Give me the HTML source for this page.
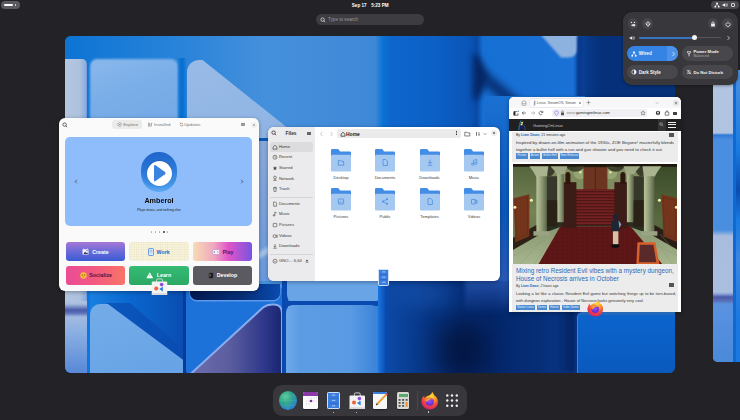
<!DOCTYPE html>
<html><head><meta charset="utf-8">
<style>
*{box-sizing:border-box;margin:0;padding:0}
html,body{width:740px;height:420px;overflow:hidden;background:#232327;font-family:"Liberation Sans",sans-serif}
.a{position:absolute}
#ws{left:65px;top:36px;width:610px;height:337px;border-radius:6px;overflow:hidden;background:#1272d4}
#ws2{left:713px;top:60px;width:40px;height:304px;border-radius:6px;overflow:hidden;background:#a9bedf}
.t5{font-size:4.4px;white-space:nowrap;line-height:6px}
.tile{width:59.8px;height:19.4px;border-radius:3px}
.tt{width:59.8px;height:19.4px;display:flex;align-items:center;justify-content:center;font-size:5.3px;font-weight:bold;white-space:nowrap}
.ico{display:inline-block;width:6px;height:6px;margin-right:3px}
.sl{font-size:4.15px;color:#3a3a3a;white-space:nowrap;line-height:6px}
.flab{width:50px;text-align:center;font-size:4.1px;line-height:6px;color:#3c3c3c;white-space:nowrap}
.ft{white-space:normal}
.tag{height:5.8px;background:#4a8ad0;color:#e8f0ff;font-size:3px;line-height:5.8px;text-align:center;white-space:nowrap;overflow:hidden;border-radius:.5px}
.qc{width:10.6px;height:11px;border-radius:50%;background:#464649}
.qt{font-size:4.5px;font-weight:bold;color:#f4f4f4;white-space:nowrap;line-height:6px}
.win{position:absolute;background:#fff;border-radius:6px;overflow:hidden;box-shadow:0 1px 4px rgba(0,0,0,.35)}
</style></head><body>
<!-- top bar -->
<div class="a" style="left:1px;top:1px;width:19px;height:8px;border-radius:4px;background:#5b5b5f"></div>
<div class="a" style="left:4px;top:4px;width:9px;height:2px;border-radius:1px;background:#fff"></div>
<div class="a" style="left:14.5px;top:4px;width:1.5px;height:2px;background:#c8c8c8"></div>
<div class="a" style="left:351.8px;top:2.8px;font-size:4.6px;line-height:6px;font-weight:bold;color:#fff;white-space:nowrap">Sep 17</div><div class="a" style="left:371.2px;top:2.8px;font-size:4.6px;line-height:6px;font-weight:bold;color:#fff;white-space:nowrap">5:23 PM</div>
<div class="a" style="left:711px;top:1px;width:28px;height:8px;border-radius:4px;background:#4a4a4e"></div>
<svg class="a" style="left:714.2px;top:2px" width="6" height="6" viewBox="0 0 6 6"><circle cx="3" cy="1.3" r=".9" fill="#fff"/><circle cx="1.3" cy="4.7" r=".9" fill="#fff"/><circle cx="4.7" cy="4.7" r=".9" fill="#fff"/><path d="M3 1.3L1.3 4.7M3 1.3L4.7 4.7" stroke="#fff" stroke-width=".6"/></svg>
<svg class="a" style="left:722.4px;top:2px" width="6" height="6" viewBox="0 0 6 6"><path d="M.6 2.2H1.8L3.2 1V5L1.8 3.8H.6Z" fill="#fff"/><path d="M4 1.8Q4.8 3 4 4.2M4.9 1.2Q6 3 4.9 4.8" stroke="#fff" stroke-width=".5" fill="none"/></svg>
<div class="a" style="left:730.8px;top:2.6px;width:4.6px;height:4.6px;border-radius:1.2px;border:.9px solid #eee"></div>

<!-- search -->
<div class="a" style="left:316px;top:13.5px;width:108px;height:11.5px;border-radius:6px;background:#3c3c41"></div>
<svg class="a" style="left:319.5px;top:16.5px" width="6" height="6" viewBox="0 0 6 6"><circle cx="2.6" cy="2.6" r="1.7" fill="none" stroke="#ddd" stroke-width=".8"/><path d="M3.8 3.8L5.2 5.2" stroke="#ddd" stroke-width=".8"/></svg>
<div class="a" style="left:328px;top:17.2px;font-size:4.6px;color:#9a9a9e;white-space:nowrap;line-height:6px">Type to search</div>

<!-- workspace -->
<div id="ws" class="a">
<div class="a" style="left:0;top:0;width:610px;height:337px;filter:blur(.7px)">
  <!-- base columns -->
  <div class="a" style="left:0;top:0;width:610px;height:337px;background:linear-gradient(90deg,#0c74d4 0px,#2a84da 120px,#4590dc 200px,#3f88d8 310px,#0a72d6 318px,#0e66cc 326px,#0c60c6 370px,#0a54b6 405px,#0a4aa6 412px,#1670d4 418px,#1a70d6 508px,#0a4aa0 514px,#083a8a 522px,#06307a 535px,#063078 610px)"></div>
  <!-- block A -->
  <div class="a" style="left:-8px;top:22.5px;width:30px;height:300px;border-radius:5px;background:linear-gradient(90deg,#b8c9e2,#adc2df 75%,#8eaede 95%,#6a96da)"></div>
  <div class="a" style="left:-8px;top:265px;width:30px;height:80px;background:linear-gradient(180deg,#b0c4e0 0px,#a8bee0 3px,#4a5aa8 9px,#5a70b8 12px,#a2bae2 16px,#8cb0e2 30px,#5a8ad8 70px)"></div>
  <!-- block B -->
  <div class="a" style="left:0;top:0;width:610px;height:337px;filter:blur(1.3px)"><div class="a" style="left:25px;top:23px;width:88px;height:79px;border-radius:7px;background:linear-gradient(160deg,#8ab8ec 0%,#7aaee8 40%,#74a8e6)"></div></div>
  <!-- block C diagonal -->
  <div class="a" style="left:0;top:0;width:610px;height:337px;filter:blur(.6px)"><div class="a" style="left:122px;top:24px;width:120px;height:78px;border-radius:12px 0 0 0;background:linear-gradient(160deg,#98bae6,#8eb4e4);clip-path:polygon(0 0,13% 0,100% 107%,100% 100%,0 100%)"></div></div>
  <div class="a" style="left:112px;top:22px;width:10px;height:120px;background:linear-gradient(90deg,rgba(8,112,208,0),#0870d0 40%,#0870d0 60%,rgba(8,112,208,0))"></div>
  <!-- block D light corner and chevron -->
  <div class="a" style="left:0;top:0;width:610px;height:337px;filter:blur(1.2px)"><div class="a" style="left:468px;top:-10px;width:45px;height:31.5px;border-radius:0 0 10px 0;background:#8eb2e0;clip-path:polygon(0 0,100% 0,100% 100%,62% 100%)"></div></div>
  <div class="a" style="left:0;top:0;width:610px;height:337px;filter:blur(3px)"><div class="a" style="left:408px;top:18px;width:22px;height:46px;background:#052664;clip-path:polygon(20% 0,80% 50%,20% 100%,0 100%,0 0)"></div></div><div class="a" style="left:416px;top:52px;width:44px;height:11px;background:#06286c;transform:rotate(40deg);filter:blur(4px)"></div>
  <div class="a" style="left:512px;top:0;width:6px;height:120px;background:#0a3a90;filter:blur(1px)"></div>

  <!-- mid region behind windows (gap shading) -->
  <div class="a" style="left:180px;top:102px;width:260px;height:3.5px;background:#0a5ab8;filter:blur(.5px)"></div><div class="a" style="left:180px;top:105px;width:260px;height:140px;background:linear-gradient(180deg,#8aaadc,#7aa2dc 50%,#6a9ae0)"></div><div class="a" style="left:185px;top:210px;width:40px;height:6px;background:#a8c4ea;transform:rotate(-30deg);filter:blur(1.5px)"></div>
  <div class="a" style="left:420px;top:60px;width:100px;height:190px;background:linear-gradient(180deg,#1a70d2,#0a58bc 60%,#2a5ab8)"></div>

  <!-- bottom: block A band already; bright line -->
  <div class="a" style="left:22px;top:255px;width:4px;height:82px;background:#0a78e0"></div>
  <!-- region above light triangle -->
  <div class="a" style="left:25px;top:255px;width:96px;height:82px;background:linear-gradient(90deg,#1a80e0 0%,#0a68d0 40%,#0a4cb0 100%)"></div>
  <svg class="a" style="left:25px;top:255px" width="96" height="82" viewBox="0 0 96 82"><path d="M16 12L96 80V60L40 12Z" fill="#0a4cb0" opacity=".7"/></svg>
  <div class="a" style="left:0;top:0;width:610px;height:337px;filter:blur(.6px)"><div class="a" style="left:25px;top:267.5px;width:96px;height:69.5px;border-radius:10px 0 0 0;background:linear-gradient(160deg,#74ace8,#66a2e6);clip-path:polygon(0 0,18% 0,100% 84%,100% 100%,0 100%)"></div></div>
  <!-- block E -->
  <div class="a" style="left:118px;top:255px;width:4px;height:82px;background:#083a98"></div>
  <div class="a" style="left:121px;top:250px;width:97px;height:90px;border-radius:6px;background:#1c72d8"></div>
  <div class="a" style="left:125px;top:248px;width:89.5px;height:15.5px;border-radius:0 0 7px 7px;background:linear-gradient(90deg,#021a50,#06307a 60%,#0a4ab0);box-shadow:0 .8px 0 .6px rgba(120,170,240,.7)"></div>
  <svg class="a" style="left:122px;top:266px" width="98" height="72" viewBox="-2 -2.5 98 72"><defs><linearGradient id="pg" x1="0" y1="0" x2="1" y2="0"><stop offset="0" stop-color="#6e6eae"/><stop offset=".45" stop-color="#5a5c9e"/><stop offset=".8" stop-color="#30388a"/><stop offset="1" stop-color="#182670"/></linearGradient><filter id="sb"><feGaussianBlur stdDeviation=".5"/></filter></defs><g filter="url(#sb)"><path d="M0 70L74 3Q78 0 83 0H85Q93 0 93 9V70Z" fill="url(#pg)"/><path d="M1 70L74 3Q78 0 83 0H85Q93 0 93 9V70" fill="none" stroke="#88acf0" stroke-width="2"/></g></svg>
  <!-- block F -->
  <div class="a" style="left:217px;top:245px;width:6px;height:92px;background:#0a4ab0"></div>
  <div class="a" style="left:222px;top:240px;width:92.5px;height:25.5px;border-radius:0 0 7px 7px;background:#68a4e6;filter:blur(.4px)"></div>
  <div class="a" style="left:219px;top:265px;width:98px;height:5px;background:#0a4ab0"></div>
  <div class="a" style="left:221px;top:269px;width:92px;height:70px;border-radius:7px 7px 0 0;background:linear-gradient(90deg,#6ea8ea 0%,#5c9ce4 15%,#5a9ae4 70%,#3a82d8 100%);filter:blur(.4px)"></div>
  <div class="a" style="left:313px;top:245px;width:8px;height:92px;background:linear-gradient(90deg,#1a78e0,#0a4ab0)"></div>
  <!-- dark middle -->
  <div class="a" style="left:320px;top:245px;width:192px;height:92px;background:linear-gradient(90deg,#0c4aa8 0%,#06327e 25%,#04266a 55%,#062e76 80%,#0a3a90 100%)"></div>
  <div class="a" style="left:372px;top:282px;width:50px;height:65px;border-radius:50%;background:#020c2c;filter:blur(12px);opacity:.65"></div><div class="a" style="left:330px;top:245px;width:60px;height:25px;border-radius:50%;background:#1a5ab8;filter:blur(10px);opacity:.6"></div><div class="a" style="left:440px;top:245px;width:60px;height:20px;border-radius:50%;background:#2a6ad0;filter:blur(8px);opacity:.6"></div>
  <div class="a" style="left:490px;top:245px;width:20px;height:92px;background:linear-gradient(90deg,rgba(4,30,90,0),#04205a);filter:blur(2px)"></div><div class="a" style="left:400px;top:238px;width:112px;height:40px;background:linear-gradient(180deg,rgba(42,90,184,.9),rgba(42,90,184,0));filter:blur(2px)"></div>
  <!-- block G bright -->
  <div class="a" style="left:512px;top:245px;width:98px;height:92px;background:#0a3a90"></div>
  <div class="a" style="left:512px;top:276px;width:100px;height:65px;border-radius:6px 0 0 0;background:linear-gradient(180deg,#3a8ae4 0px,#0c64cc 4px,#0a5ec4 60%,#0a58bc 100%);box-shadow:inset 1px 0 0 rgba(90,160,240,.6)"></div>
</div>
</div>
<div id="ws2" class="a" style="left:713px;top:70px;width:40px;height:292px;border-radius:5px;overflow:hidden;background:#a9bedf">
  <div class="a" style="left:0;top:0;width:40px;height:322px;filter:blur(.6px)">
  <div class="a" style="left:-2px;top:0;width:22px;height:322px;background:linear-gradient(180deg,#b2c5e1 0px,#b0c4e0 63px,#2f7ad8 65px,#4a8ee2 70px,#4a8ee0 160px,#a8bcde 166px,#aabfe0 222px,#8aa2d6 224px,#4a5aa8 227px,#5a70b8 231px,#5a92e0 234px,#4a8ad8 292px)"></div>
  <div class="a" style="left:20px;top:0;width:4px;height:322px;background:#0d6ad4"></div>
  <div class="a" style="left:23px;top:0;width:20px;height:322px;background:linear-gradient(180deg,#4a90e0 0px,#1a7ae0 80px,#0a4cb0 120px,#1a7ae0 150px,#3a86e0 190px,#1a78e0 250px,#1a78e0 322px)"></div>
  </div>
</div>
<!-- software window -->
<div class="win" style="left:59px;top:118px;width:200px;height:173px;background:#fafafa">
  <svg class="a" style="left:2.5px;top:3.5px" width="6" height="6" viewBox="0 0 6 6"><circle cx="2.6" cy="2.6" r="1.7" fill="none" stroke="#444" stroke-width=".8"/><path d="M3.8 3.8L5.2 5.2" stroke="#444" stroke-width=".8"/></svg>
  <div class="a" style="left:53.4px;top:2px;width:30px;height:9px;border-radius:3px;background:#ebebeb"></div>
  <svg class="a" style="left:58.2px;top:4.4px" width="5" height="5" viewBox="0 0 5 5"><circle cx="2.5" cy="2.5" r="1.8" fill="none" stroke="#777" stroke-width=".5"/><path d="M3.3 1.7L2.8 2.8 1.7 3.3 2.2 2.2z" fill="#777"/></svg>
  <div class="a t5" style="left:64.2px;top:3.6px;color:#777">Explore</div>
  <svg class="a" style="left:89.2px;top:4.3px" width="5" height="5" viewBox="0 0 5 5"><path d="M.6 4.6V.8M1.8 4.6V.8M3 4.6L3.8.8" stroke="#666" stroke-width=".6" fill="none"/></svg>
  <div class="a t5" style="left:95px;top:3.6px;color:#777">Installed</div>
  <svg class="a" style="left:119.8px;top:4.2px" width="5" height="5" viewBox="0 0 5 5"><path d="M4 2.5A1.5 1.5 0 0 0 1.4 1.5M1 2.5A1.5 1.5 0 0 0 3.6 3.5" stroke="#777" stroke-width=".5" fill="none"/><path d="M1.2 .7V1.7H2.2M3.8 4.3V3.3H2.8" stroke="#777" stroke-width=".45" fill="none"/></svg>
  <div class="a t5" style="left:125.2px;top:3.6px;color:#777">Updates</div>
  <div class="a" style="left:182px;top:4.6px;width:4px;height:3.8px;border-top:.5px solid #999;border-bottom:.5px solid #999"></div>
  <div class="a" style="left:182px;top:6.3px;width:4px;height:.5px;background:#999"></div>
  <div class="a" style="left:191.5px;top:3.5px;width:6px;height:6px;border-radius:50%;background:#f0f0f0"></div>
  <svg class="a" style="left:192.5px;top:4.5px" width="4" height="4" viewBox="0 0 4 4"><path d="M1.1 1.1L2.9 2.9M2.9 1.1L1.1 2.9" stroke="#777" stroke-width=".5"/></svg>

  <div class="a" style="left:6px;top:19px;width:187px;height:88.5px;border-radius:5px;background:#8fbdfb"></div>
  <svg class="a" style="left:15px;top:61px" width="4" height="5" viewBox="0 0 4 5"><path d="M2.8 .8L1.2 2.5 2.8 4.2" stroke="#333" stroke-width=".7" fill="none"/></svg>
  <svg class="a" style="left:181px;top:61px" width="4" height="5" viewBox="0 0 4 5"><path d="M1.2 .8L2.8 2.5 1.2 4.2" stroke="#333" stroke-width=".7" fill="none"/></svg>
  <!-- amberol icon -->
  <div class="a" style="left:82.2px;top:37px;width:35.8px;height:37.2px;border-radius:50%;background:linear-gradient(180deg,#2a64c0,#3c8ee6 70%,#5aa8f4)"></div>
  <div class="a" style="left:82.2px;top:34.4px;width:35.8px;height:36px;border-radius:50%;background:linear-gradient(170deg,#1e62c8 0%,#2a78d8 50%,#4a9cec 100%)"></div>
  <div class="a" style="left:87.5px;top:42.9px;width:25px;height:25px;border-radius:50%;background:#fff;box-shadow:0 -.6px 1px rgba(0,40,120,.35)"></div>
  <svg class="a" style="left:94px;top:46.2px" width="13.5" height="18.5" viewBox="0 0 13.5 18.5"><path d="M1 2.2Q1 .4 2.6 1.3L12 8.1Q13.2 9.2 12 10.2L2.6 17.1Q1 18 1 16.2Z" fill="#3a84e0"/></svg>
  <div class="a" style="left:40px;top:78.2px;width:120px;text-align:center;font-size:8px;line-height:9px;font-weight:bold;color:#0a0a0a;transform:scaleX(.9)">Amberol</div>
  <div class="a" style="left:40px;top:89.8px;width:120px;text-align:center;font-size:3.3px;color:#222">Plays music, and nothing else</div>

  <div class="a" style="left:91.7px;top:113px;width:1.6px;height:1.6px;border-radius:50%;background:#aaa"></div>
  <div class="a" style="left:95.7px;top:113px;width:1.6px;height:1.6px;border-radius:50%;background:#aaa"></div>
  <div class="a" style="left:99.7px;top:113px;width:1.6px;height:1.6px;border-radius:50%;background:#aaa"></div>
  <div class="a" style="left:103.6px;top:112.6px;width:2.2px;height:2.2px;border-radius:50%;background:#333"></div>
  <div class="a" style="left:107.7px;top:113px;width:1.6px;height:1.6px;border-radius:50%;background:#aaa"></div>

  <!-- tiles -->
  <div class="a tile" style="left:6.5px;top:124px;background:linear-gradient(180deg,#a678d4,#6a6ad8 50%,#3c5ad4)"></div>
  <div class="a tile" style="left:69.8px;top:124px;background-color:#f8f4dc;background-image:linear-gradient(rgba(210,200,160,.18) .4px,transparent .4px),linear-gradient(90deg,rgba(210,200,160,.18) .4px,transparent .4px);background-size:2.4px 2.4px"></div>
  <div class="a tile" style="left:133.6px;top:124px;background:linear-gradient(90deg,#f8dcb4,#f0a8c0 35%,#e054c8 60%,#7854e0)"></div>
  <div class="a tile" style="left:6.5px;top:147.8px;background:linear-gradient(90deg,#ea4c96,#f45a80 50%,#f87468)"></div>
  <div class="a tile" style="left:69.8px;top:147.8px;background:linear-gradient(180deg,#36bc74,#2aa864)"></div>
  <div class="a tile" style="left:133.6px;top:147.8px;background:#5b5a60"></div>

  <div class="a tt" style="left:6.5px;top:124px;color:#fff"><svg style="margin-right:3px" width="7" height="7" viewBox="0 0 7 7"><rect x=".5" y="1.2" width="6" height="5.3" rx=".6" fill="#f4f4f8"/><path d="M1.5 6L3 3.6 4.2 5 5.2 4.2 6 6Z" fill="#3a3a5a"/><circle cx="5" cy="2.6" r=".6" fill="#3a3a5a"/><path d="M1.2 .5L2.4 1.4M5.8 .5L4.6 1.4" stroke="#f4f4f8" stroke-width=".5"/></svg>Create</div>
  <div class="a tt" style="left:69.8px;top:124px;color:#1c62c8"><svg style="margin-right:3px" width="6" height="8" viewBox="0 0 6 8"><rect x=".5" y=".5" width="5" height="7" rx=".8" fill="#dbe8fa" stroke="#3a7ad8" stroke-width=".7"/><path d="M1.8 2.5H4.2M1.8 4H4.2" stroke="#3a7ad8" stroke-width=".4"/></svg>Work</div>
  <div class="a tt" style="left:133.6px;top:124px;color:#4a1a78"><svg style="margin-right:3px" width="8" height="6" viewBox="0 0 8 6"><rect x=".4" y=".6" width="7.2" height="4.8" rx="1" fill="#f8f4fa" stroke="#8a6aa0" stroke-width=".4"/><path d="M1.6 3H3M2.3 2.3V3.7" stroke="#5a3a7a" stroke-width=".5"/><circle cx="5.4" cy="2.5" r=".4" fill="#5a3a7a"/><circle cx="6.2" cy="3.4" r=".4" fill="#5a3a7a"/></svg>Play</div>
  <div class="a tt" style="left:6.5px;top:147.8px;color:#5a1030"><svg style="margin-right:2.5px;margin-left:1px" width="7" height="7" viewBox="0 0 7 7"><circle cx="3.5" cy="3.5" r="3.2" fill="#f8c433"/><path d="M1.6 2.6H3.1V3.4H1.6ZM3.9 2.6H5.4V3.4H3.9Z" fill="#8a5a10"/><path d="M2.4 4.8Q3.5 5.4 4.6 4.8" stroke="#8a5a10" stroke-width=".4" fill="none"/></svg>Socialize</div>
  <div class="a tt" style="left:69.8px;top:147.8px;color:#fff"><svg style="margin-right:3px" width="7.5" height="6.5" viewBox="0 0 7.5 6.5"><path d="M3.75 .3L7.2 6.2H.3Z" fill="#fff"/><path d="M3.75 2.2V4.6" stroke="#2fb26c" stroke-width=".5"/></svg>Learn</div>
  <div class="a tt" style="left:133.6px;top:147.8px;color:#fff"><svg style="margin-right:3px" width="6" height="7" viewBox="0 0 6 7"><rect x=".3" y=".3" width="5.4" height="6.4" rx=".5" fill="#1e1e22" stroke="#9a9aa0" stroke-width=".4"/><path d="M1.4 2.2L2.6 3.2 1.4 4.2" stroke="#fff" stroke-width=".45" fill="none"/></svg>Develop</div>
</div>

<!-- files window -->
<div class="win" style="left:268px;top:127px;width:232px;height:154px;">
  <div class="a" style="left:0;top:0;width:47px;height:154px;background:#ebebed"></div>
  <svg class="a" style="left:2.7px;top:3.3px" width="6" height="6" viewBox="0 0 6 6"><circle cx="2.6" cy="2.6" r="1.7" fill="none" stroke="#333" stroke-width=".8"/><path d="M3.8 3.8L5.2 5.2" stroke="#333" stroke-width=".8"/></svg>
  <div class="a" style="left:10px;top:3.6px;width:26px;text-align:center;font-size:4.8px;line-height:6px;font-weight:bold;color:#333">Files</div>
  <div class="a" style="left:39px;top:4.8px;width:4px;height:3.6px;border-top:.5px solid #666;border-bottom:.5px solid #666"></div><div class="a" style="left:39px;top:6.4px;width:4px;height:.5px;background:#666"></div>
  <div class="a" style="left:2px;top:15px;width:43px;height:9.5px;border-radius:2.5px;background:#dcdcde"></div>
  <svg class="a" style="left:3.9px;top:16.5px" width="6" height="6" viewBox="0 0 6 6"><path d="M1 3.2L3 1.3 5 3.2V5.2H1Z" fill="none" stroke="#333" stroke-width=".6"/></svg><div class="a sl" style="left:11px;top:16.7px">Home</div>
  <svg class="a" style="left:3.9px;top:27.0px" width="6" height="6" viewBox="0 0 6 6"><circle cx="3" cy="3.2" r="2" fill="none" stroke="#444" stroke-width=".6"/><path d="M3 2.1V3.3L3.8 3.8" stroke="#444" stroke-width=".5" fill="none"/></svg><div class="a sl" style="left:11px;top:27.2px">Recent</div>
  <svg class="a" style="left:3.9px;top:37.8px" width="6" height="6" viewBox="0 0 6 6"><path d="M3 1l.6 1.5 1.6.1-1.2 1 .4 1.6L3 4.3 1.6 5.2l.4-1.6-1.2-1 1.6-.1z" fill="#444"/></svg><div class="a sl" style="left:11px;top:38.0px">Starred</div>
  <svg class="a" style="left:3.9px;top:48.3px" width="6" height="6" viewBox="0 0 6 6"><circle cx="3" cy="2.5" r="1.4" fill="none" stroke="#444" stroke-width=".6"/><path d="M3 3.9V5.4M1.4 5.4H4.6" stroke="#444" stroke-width=".6"/></svg><div class="a sl" style="left:11px;top:48.5px">Network</div>
  <svg class="a" style="left:3.9px;top:59.0px" width="6" height="6" viewBox="0 0 6 6"><path d="M1.2 1.9H4.8M1.7 1.9L2 5.4H4L4.3 1.9M2.4 1.9V1.2H3.6V1.9" fill="none" stroke="#444" stroke-width=".6"/></svg><div class="a sl" style="left:11px;top:59.2px">Trash</div>
  <svg class="a" style="left:3.9px;top:73.6px" width="6" height="6" viewBox="0 0 6 6"><path d="M1.6 1H3.6L4.6 2V5.2H1.6Z" fill="none" stroke="#444" stroke-width=".6"/></svg><div class="a sl" style="left:11px;top:73.8px">Documents</div>
  <svg class="a" style="left:3.9px;top:84.1px" width="6" height="6" viewBox="0 0 6 6"><circle cx="2" cy="4.4" r=".8" fill="none" stroke="#444" stroke-width=".6"/><path d="M2.8 4.4V1.2L4.6 1.8" fill="none" stroke="#444" stroke-width=".6"/></svg><div class="a sl" style="left:11px;top:84.3px">Music</div>
  <svg class="a" style="left:3.9px;top:94.8px" width="6" height="6" viewBox="0 0 6 6"><rect x="1.2" y="1.4" width="3.6" height="3.4" rx=".4" fill="none" stroke="#444" stroke-width=".6"/></svg><div class="a sl" style="left:11px;top:95.0px">Pictures</div>
  <svg class="a" style="left:3.9px;top:105.5px" width="6" height="6" viewBox="0 0 6 6"><circle cx="2.6" cy="3.2" r="1.5" fill="none" stroke="#444" stroke-width=".6"/><path d="M4.2 2.4L5.2 2V4.4L4.2 4" fill="none" stroke="#444" stroke-width=".6"/></svg><div class="a sl" style="left:11px;top:105.7px">Videos</div>
  <svg class="a" style="left:3.9px;top:116.2px" width="6" height="6" viewBox="0 0 6 6"><path d="M3 1V4.2M1.8 3L3 4.2 4.2 3M1.2 5.2H4.8" fill="none" stroke="#444" stroke-width=".6"/></svg><div class="a sl" style="left:11px;top:116.4px">Downloads</div>
  <svg class="a" style="left:3.9px;top:130.5px" width="6" height="6" viewBox="0 0 6 6"><circle cx="3" cy="3.2" r="2" fill="none" stroke="#444" stroke-width=".6"/><circle cx="3" cy="3.2" r=".5" fill="#444"/></svg><div class="a sl" style="left:11px;top:130.7px">GNO… 6,64</div><svg class="a" style="left:36.5px;top:131.5px" width="4" height="4" viewBox="0 0 4 4"><path d="M2 .5L3.4 2.2H.6Z" fill="#444"/><rect x=".6" y="2.8" width="2.8" height=".6" fill="#444"/></svg>
  <div class="a" style="left:2px;top:69.5px;width:43px;height:.5px;background:#d6d6d8"></div>
  <div class="a" style="left:2px;top:126.6px;width:43px;height:.5px;background:#d6d6d8"></div>
  <svg class="a" style="left:51px;top:3.5px" width="5" height="6" viewBox="0 0 5 6"><path d="M3.2 1L1.6 3 3.2 5" stroke="#aaa" stroke-width=".6" fill="none"/></svg>
  <svg class="a" style="left:61px;top:3.5px" width="5" height="6" viewBox="0 0 5 6"><path d="M1.8 1L3.4 3 1.8 5" stroke="#aaa" stroke-width=".6" fill="none"/></svg>
  <div class="a" style="left:69px;top:1.8px;width:124px;height:9.4px;border-radius:2.5px;background:#ebebeb"></div>
  <svg class="a" style="left:71.5px;top:3.6px" width="6" height="6" viewBox="0 0 6 6"><path d="M1 3.2L3 1.3 5 3.2V5.2H1Z" fill="none" stroke="#222" stroke-width=".7"/></svg>
  <div class="a" style="left:78px;top:3.5px;font-size:5px;font-weight:bold;color:#222">Home</div>
  <div class="a" style="left:187.6px;top:4px;width:.9px;height:.9px;background:#333;box-shadow:0 1.5px #333,0 3px #333"></div>
  <svg class="a" style="left:196px;top:3.5px" width="7" height="6" viewBox="0 0 7 6"><path d="M.8 1.2H2.6L3.2 1.9H5.8V5H.8Z" fill="none" stroke="#333" stroke-width=".6"/></svg>
  <svg class="a" style="left:207px;top:3.5px" width="6" height="6" viewBox="0 0 6 6"><path d="M1.5 1V5M4 1V5M1 2.2H2M3.5 3.5H4.5" stroke="#444" stroke-width=".6" fill="none"/></svg>
  <svg class="a" style="left:215px;top:4.5px" width="4" height="4" viewBox="0 0 4 4"><path d="M.8 1.4L2 2.6 3.2 1.4" stroke="#444" stroke-width=".6" fill="none"/></svg>
  <div class="a" style="left:223px;top:3.4px;width:6px;height:6px;border-radius:50%;background:#ebebeb"></div><svg class="a" style="left:224px;top:4.4px" width="4" height="4" viewBox="0 0 4 4"><path d="M1 1L3 3M3 1L1 3" stroke="#444" stroke-width=".6"/></svg>
  <svg class="a" style="left:63px;top:22px" width="20" height="23" viewBox="0 0 20 23"><path d="M1.2 0H6.4Q7.4 0 8 .8L9 2.4H18.8Q20 2.4 20 3.6V21H0V1.2Q0 0 1.2 0Z" fill="#438de6"/><rect x="0" y="5.8" width="20" height="16.8" rx="1.4" fill="#a4c8f0"/><path d="M7.3 11.5h2.2l.6.8h2.6v3.9H7.3z" fill="none" stroke="#4a8ee0" stroke-width=".8"/></svg>
  <div class="a flab" style="left:48px;top:48px">Desktop</div>

  <svg class="a" style="left:107px;top:22px" width="20" height="23" viewBox="0 0 20 23"><path d="M1.2 0H6.4Q7.4 0 8 .8L9 2.4H18.8Q20 2.4 20 3.6V21H0V1.2Q0 0 1.2 0Z" fill="#438de6"/><rect x="0" y="5.8" width="20" height="16.8" rx="1.4" fill="#a4c8f0"/><path d="M8 10.5h2.8l1.6 1.6v4.4H8z" fill="none" stroke="#4a8ee0" stroke-width=".8"/></svg>
  <div class="a flab" style="left:92px;top:48px">Documents</div>

  <svg class="a" style="left:151.5px;top:22px" width="20" height="23" viewBox="0 0 20 23"><path d="M1.2 0H6.4Q7.4 0 8 .8L9 2.4H18.8Q20 2.4 20 3.6V21H0V1.2Q0 0 1.2 0Z" fill="#438de6"/><rect x="0" y="5.8" width="20" height="16.8" rx="1.4" fill="#a4c8f0"/><path d="M10 10.5v4.3M8.2 13l1.8 1.8 1.8-1.8M7.7 16.3h4.6" fill="none" stroke="#4a8ee0" stroke-width=".8"/></svg>
  <div class="a flab" style="left:136.5px;top:48px">Downloads</div>

  <svg class="a" style="left:196px;top:22px" width="20" height="23" viewBox="0 0 20 23"><path d="M1.2 0H6.4Q7.4 0 8 .8L9 2.4H18.8Q20 2.4 20 3.6V21H0V1.2Q0 0 1.2 0Z" fill="#438de6"/><rect x="0" y="5.8" width="20" height="16.8" rx="1.4" fill="#a4c8f0"/><circle cx="8.6" cy="15.2" r="1.1" fill="none" stroke="#4a8ee0" stroke-width=".8"/><circle cx="11.6" cy="14.5" r="1.1" fill="none" stroke="#4a8ee0" stroke-width=".8"/><path d="M9.7 15.2V11.2l3-.7v4" fill="none" stroke="#4a8ee0" stroke-width=".8"/></svg>
  <div class="a flab" style="left:181px;top:48px">Music</div>

  <svg class="a" style="left:63px;top:61px" width="20" height="23" viewBox="0 0 20 23"><path d="M1.2 0H6.4Q7.4 0 8 .8L9 2.4H18.8Q20 2.4 20 3.6V21H0V1.2Q0 0 1.2 0Z" fill="#438de6"/><rect x="0" y="5.8" width="20" height="16.8" rx="1.4" fill="#a4c8f0"/><rect x="7.4" y="11" width="5.2" height="5" rx=".6" fill="none" stroke="#4a8ee0" stroke-width=".8"/><path d="M8 15.4l1.6-1.8 1.2 1.1.8-.7" fill="none" stroke="#4a8ee0" stroke-width=".6"/></svg>
  <div class="a flab" style="left:48px;top:87px">Pictures</div>

  <svg class="a" style="left:107px;top:61px" width="20" height="23" viewBox="0 0 20 23"><path d="M1.2 0H6.4Q7.4 0 8 .8L9 2.4H18.8Q20 2.4 20 3.6V21H0V1.2Q0 0 1.2 0Z" fill="#438de6"/><rect x="0" y="5.8" width="20" height="16.8" rx="1.4" fill="#a4c8f0"/><circle cx="12" cy="11.3" r="1" fill="#4a8ee0"/><circle cx="8" cy="13.5" r="1" fill="#4a8ee0"/><circle cx="12" cy="15.8" r="1" fill="#4a8ee0"/><path d="M12 11.3L8 13.5 12 15.8" fill="none" stroke="#4a8ee0" stroke-width=".7"/></svg>
  <div class="a flab" style="left:92px;top:87px">Public</div>

  <svg class="a" style="left:151.5px;top:61px" width="20" height="23" viewBox="0 0 20 23"><path d="M1.2 0H6.4Q7.4 0 8 .8L9 2.4H18.8Q20 2.4 20 3.6V21H0V1.2Q0 0 1.2 0Z" fill="#438de6"/><rect x="0" y="5.8" width="20" height="16.8" rx="1.4" fill="#a4c8f0"/><path d="M8 10.5h2.8l1.6 1.6v4.4H8z" fill="none" stroke="#4a8ee0" stroke-width=".8"/></svg>
  <div class="a flab" style="left:136.5px;top:87px">Templates</div>

  <svg class="a" style="left:196px;top:61px" width="20" height="23" viewBox="0 0 20 23"><path d="M1.2 0H6.4Q7.4 0 8 .8L9 2.4H18.8Q20 2.4 20 3.6V21H0V1.2Q0 0 1.2 0Z" fill="#438de6"/><rect x="0" y="5.8" width="20" height="16.8" rx="1.4" fill="#a4c8f0"/><path d="M7.5 11.5h3.6v4.4H7.5zM11.1 13l1.8-1v3.4l-1.8-1" fill="none" stroke="#4a8ee0" stroke-width=".8"/></svg>
  <div class="a flab" style="left:181px;top:87px">Videos</div>

</div>

<!-- firefox window -->
<div class="win" style="left:509px;top:97px;width:172px;height:215px;border-radius:5px 5px 0 0;background:#fff">
  <div class="a" style="left:0;top:0;width:172px;height:11px;background:#f7f7f9"></div>
  <svg class="a" style="left:11.5px;top:2.6px" width="6" height="6" viewBox="0 0 6 6"><path d="M1 3V4.6Q1 5.3 1.7 5.3H4.3Q5 5.3 5 4.6V3Q5 .8 3 .8 1 .8 1 3Z" fill="none" stroke="#777" stroke-width=".55"/><path d="M1 3.4H2.2L2.6 3.9H3.4L3.8 3.4H5" fill="none" stroke="#777" stroke-width=".45"/></svg>
  <div class="a" style="left:21px;top:1.5px;width:53px;height:8.4px;border-radius:2px;background:#fff;box-shadow:0 0 0 .4px rgba(0,0,0,.12)"></div>
  <svg class="a" style="left:22.5px;top:3px" width="5" height="6" viewBox="0 0 5 6"><path d="M2.8 .6V4.4Q2.8 5.4 1.6 5.2" fill="none" stroke="#4a6a90" stroke-width=".8"/><path d="M1.4 2.8L2.8 3.6" stroke="#4a90c0" stroke-width=".6"/></svg>
  <div class="a" style="left:27.8px;top:2.7px;font-size:3.65px;color:#555;white-space:nowrap;line-height:6px">Linux, SteamOS, Steam</div>
  <svg class="a" style="left:68.5px;top:3.8px" width="4" height="4" viewBox="0 0 4 4"><path d="M1 1L3 3M3 1L1 3" stroke="#555" stroke-width=".5"/></svg>
  <svg class="a" style="left:77px;top:3.4px" width="5" height="5" viewBox="0 0 5 5"><path d="M2.5 .5V4.5M.5 2.5H4.5" stroke="#666" stroke-width=".55"/></svg>
  <svg class="a" style="left:145.8px;top:3.6px" width="4" height="4" viewBox="0 0 4 4"><path d="M.8 1.4L2 2.6 3.2 1.4" stroke="#888" stroke-width=".5" fill="none"/></svg>
  <div class="a" style="left:163.5px;top:2.5px;width:6px;height:6px;border-radius:50%;background:#e2e2e6"></div><svg class="a" style="left:164.5px;top:3.5px" width="4" height="4" viewBox="0 0 4 4"><path d="M1 1L3 3M3 1L1 3" stroke="#555" stroke-width=".5"/></svg>

  <svg class="a" style="left:3.5px;top:13.2px" width="7" height="6" viewBox="0 0 7 6"><path d="M.8 1.6H4.2M.8 1.6V5.2H5V3.2" fill="none" stroke="#222" stroke-width=".6"/><rect x=".8" y="1.6" width="1.6" height="3.6" fill="#222"/><circle cx="5.2" cy="1.2" r=".8" fill="#3a9ad8"/></svg>
  <svg class="a" style="left:11.8px;top:13.3px" width="6" height="6" viewBox="0 0 6 6"><path d="M5 3H1.2M2.8 1.4L1.2 3 2.8 4.6" stroke="#333" stroke-width=".6" fill="none"/></svg>
  <svg class="a" style="left:21px;top:13.3px" width="6" height="6" viewBox="0 0 6 6"><path d="M1 3H4.8M3.2 1.4L4.8 3 3.2 4.6" stroke="#999" stroke-width=".6" fill="none"/></svg>
  <svg class="a" style="left:29px;top:13.3px" width="6" height="6" viewBox="0 0 6 6"><path d="M4.6 2.4A1.8 1.8 0 1 0 4.2 4.3" stroke="#333" stroke-width=".6" fill="none"/><path d="M4.8 .9V2.6H3.1" stroke="#333" stroke-width=".6" fill="none"/></svg>
  <div class="a" style="left:43px;top:12.4px;width:95px;height:7.8px;border-radius:2px;background:#f0f0f4"></div>
  <svg class="a" style="left:45px;top:13.4px" width="5" height="6" viewBox="0 0 5 6"><path d="M2.5 .8L4.2 1.5V3Q4.2 4.6 2.5 5.4 .8 4.6.8 3V1.5Z" fill="none" stroke="#6a5ae0" stroke-width=".55"/></svg>
  <svg class="a" style="left:51.2px;top:13.3px" width="5" height="6" viewBox="0 0 5 6"><rect x="1" y="2.6" width="3" height="2.6" rx=".4" fill="#555"/><path d="M1.6 2.6V1.8Q1.6 .8 2.5 .8 3.4 .8 3.4 1.8V2.6" fill="none" stroke="#555" stroke-width=".5"/></svg>
  <div class="a" style="left:57.5px;top:13.3px;font-size:3.95px;color:#888;white-space:nowrap;line-height:6px">www.<span style="color:#222">gamingonlinux.com</span></div>
  <svg class="a" style="left:131px;top:13.4px" width="6" height="6" viewBox="0 0 6 6"><path d="M3 .8L3.7 2.2 5.2 2.4 4.1 3.4 4.4 5 3 4.2 1.6 5 1.9 3.4.8 2.4 2.3 2.2Z" fill="none" stroke="#555" stroke-width=".5"/></svg>
  <svg class="a" style="left:146px;top:13.2px" width="6" height="6" viewBox="0 0 6 6"><circle cx="3" cy="3" r="2.2" fill="#333"/><circle cx="3" cy="2.4" r=".9" fill="#eee"/><path d="M1.6 4.4Q3 3.2 4.4 4.4" stroke="#eee" stroke-width=".6" fill="none"/></svg>
  <svg class="a" style="left:155px;top:13.2px" width="6" height="6" viewBox="0 0 6 6"><path d="M1.2 5.2V2.4H2.2V1H3.8V2.4H4.8V5.2Z" fill="none" stroke="#333" stroke-width=".6"/></svg>
  <div class="a" style="left:164.2px;top:14.7px;width:3.6px;height:3px;border-top:.5px solid #444;border-bottom:.5px solid #444"></div><div class="a" style="left:164.2px;top:16px;width:3.6px;height:.5px;background:#444"></div>

  <!-- GOL header -->
  <div class="a" style="left:0;top:21.7px;width:172px;height:12.3px;background:#202020"></div>
  <svg class="a" style="left:6.5px;top:21.8px" width="12" height="12" viewBox="0 0 12 12"><path d="M5 1.5Q3.5 4 4 6 2.5 8 2.8 11" fill="none" stroke="#2a8aa8" stroke-width="1"/><path d="M7.5 6Q9.5 8 9 11" fill="none" stroke="#3a6a8a" stroke-width=".8"/><ellipse cx="6.2" cy="8.8" rx="2.2" ry="2.4" fill="#1c1c5c"/><path d="M4.6 3.4L7.4 2.6 6.6 5Z" fill="#e8e060"/><circle cx="5.6" cy="5.4" r=".9" fill="#f0f4ff"/></svg>
  <div class="a" style="left:24px;top:25.7px;font-size:4.15px;color:#c8c8c8;white-space:nowrap;line-height:6px">GamingOnLinux</div>
  <div class="a" style="left:149px;top:21.7px;width:7.7px;height:12.3px;background:#333"></div>
  <svg class="a" style="left:150.3px;top:25.3px" width="5" height="5" viewBox="0 0 5 5"><circle cx="2" cy="2" r="1.3" fill="none" stroke="#bbb" stroke-width=".6"/><path d="M3 3L4.3 4.3" stroke="#bbb" stroke-width=".6"/></svg>
  <div class="a" style="left:158.6px;top:24.6px;width:8.2px;height:6.6px;border-top:1.2px solid #eee;border-bottom:1.2px solid #eee"></div><div class="a" style="left:158.6px;top:27.3px;width:8.2px;height:1.2px;background:#eee"></div>

  <!-- content -->
  <div class="a" style="left:0;top:34px;width:172px;height:181px;background:#fff"></div>
  <div class="a" style="left:3px;top:34.5px;width:166px;height:30px;background:#ececec"></div>
  <div class="a ft" style="left:7px;top:36px;font-size:3.5px;color:#333">By <b style="color:#2a6ab8">Liam Dawe</b>, 21 minutes ago</div>
  <div class="a" style="left:159.5px;top:35.6px;width:5px;height:4px;background:#555"></div>
  <div class="a ft" style="left:7px;top:43px;width:158px;font-size:4.3px;line-height:6.5px;color:#333;text-align:justify;text-align-last:left">Inspired by drawn-on-film animation of the 1930s, ZOE Begone! masterfully blends together a bullet hell with a run and gun shooter and you need to check it out.</div>
  <div class="a tag" style="left:7px;top:56.2px;width:11.7px">Fiction</div>
  <div class="a tag" style="left:20.7px;top:56.2px;width:10.3px">Action</div>
  <div class="a tag" style="left:33px;top:56.2px;width:16px">Bullet Hell</div>
  <div class="a tag" style="left:51px;top:56.2px;width:18.8px">New Release</div>

  <!-- game image -->
  <svg id="game" class="a" style="left:3.6px;top:66.8px" width="164.8" height="100" viewBox="512.6 163.8 164.8 100">
  <defs><filter id="bl" x="-5%" y="-5%" width="110%" height="110%"><feGaussianBlur stdDeviation=".5"/></filter>
  <linearGradient id="wallL" x1="0" y1="0" x2="0" y2="1"><stop offset="0" stop-color="#55633c"/><stop offset=".5" stop-color="#748454"/><stop offset="1" stop-color="#627248"/></linearGradient>
  <linearGradient id="wallR" x1="0" y1="0" x2="0" y2="1"><stop offset="0" stop-color="#3a4a2a"/><stop offset=".6" stop-color="#5a6a40"/><stop offset="1" stop-color="#4a5a34"/></linearGradient>
  <linearGradient id="pil" x1="0" x2="1"><stop offset="0" stop-color="#b8c29a"/><stop offset=".4" stop-color="#9aa47e"/><stop offset="1" stop-color="#5a6648"/></linearGradient>
  <linearGradient id="flr" x1="0" y1="0" x2="0" y2="1"><stop offset="0" stop-color="#86966e"/><stop offset="1" stop-color="#a8b690"/></linearGradient>
  <pattern id="dots" width="5" height="4" patternUnits="userSpaceOnUse"><rect width="5" height="4" fill="#5e1616"/><circle cx="2" cy="2" r=".6" fill="#300a0a"/></pattern>
  <pattern id="stairs" width="4" height="3" patternUnits="userSpaceOnUse"><rect width="4" height="3" fill="#722020"/><rect y="2" width="4" height="1" fill="#461010"/></pattern>
  </defs>
  <g filter="url(#bl)">
  <rect x="510" y="160" width="170" height="106" fill="#2a2e20"/>
  <rect x="546" y="167" width="98" height="36" fill="#7e8c5e"/>
  <circle cx="580" cy="172" r="7" fill="#a0ae7c" opacity=".7"/><circle cx="610" cy="172" r="7" fill="#a0ae7c" opacity=".7"/>
  <path d="M512 164H541V232L512 258Z" fill="url(#wallL)"/>
  <path d="M512 238L541 222V232L512 258Z" fill="#2e2016"/>
  <path d="M649 164H678V258L649 232Z" fill="url(#wallR)"/>
  <path d="M649 222L678 238V258L649 232Z" fill="#2a1e14"/>
  <path d="M546 176H557V226H546ZM633 176H644V226H633Z" fill="#34382a"/><path d="M546 200H557V226H546ZM633 200H644V226H633Z" fill="#2a2016"/>
  <rect x="510" y="163" width="170" height="3.5" fill="#1a140e"/>
  <path d="M541 166Q549 186 557 166ZM565 166Q574 176 583 168V166ZM607 166V168Q616 176 625 166ZM633 166Q641 186 649 166Z" fill="#2a2a1c" opacity=".8"/>
  <path d="M512 264V250L540 234 562 226H628L650 234 678 250V264Z" fill="url(#flr)"/>
  <path d="M520 264L548 232M534 264L556 230M650 232L672 264M660 234L678 256M512 256L545 240M645 240L678 256" stroke="#8a9a72" stroke-width=".4"/>
  <path d="M560 226H630L662 264H538Z" fill="url(#dots)"/>
  <rect x="583" y="167" width="24" height="23" fill="#6c3420"/>
  <path d="M595 167V190M583 167H607" stroke="#3e1a0e" stroke-width=".6"/>
  <rect x="575" y="189" width="40" height="36" fill="url(#stairs)"/>
  <rect x="562" y="182" width="14" height="46" fill="#3a1c14"/>
  <rect x="614" y="182" width="14" height="46" fill="#3a1c14"/>
  <rect x="565" y="174" width="5" height="10" fill="#2e160e"/><circle cx="567.5" cy="174" r="2.2" fill="#2e160e"/>
  <rect x="620" y="174" width="5" height="10" fill="#2e160e"/><circle cx="622.5" cy="174" r="2.2" fill="#2e160e"/>
  <path d="M529 166H548Q547 172 546.5 177H536Q533 171 529 166Z" fill="#aab48e"/>
  <rect x="536" y="176" width="10.5" height="56" fill="url(#pil)"/>
  <rect x="533" y="231" width="16" height="4.5" fill="#9aa484"/>
  <path d="M550 166H567Q565 171 563.5 175H557Q554 170 550 166Z" fill="#9ea884"/>
  <rect x="557" y="174" width="6.5" height="48" fill="url(#pil)"/>
  <path d="M623 166H640Q636 170 633 175H626.5Q625 171 623 166Z" fill="#9ea884"/>
  <rect x="626.5" y="174" width="6.5" height="48" fill="url(#pil)"/>
  <path d="M642 166H661Q657 171 654 177H643.5Q643 172 642 166Z" fill="#aab48e"/>
  <rect x="643.5" y="176" width="10.5" height="56" fill="url(#pil)"/>
  <rect x="641" y="231" width="16" height="4.5" fill="#9aa484"/>
  <path d="M513 198L529 194V236L515 242Z" fill="#74361e"/>
  <path d="M515 200L527 197V234L516 239Z" fill="none" stroke="#5a2810" stroke-width=".5"/>
  <path d="M661 194L677 198V242L663 236Z" fill="#74361e"/>
  <path d="M663 197L675 200V239L664 234Z" fill="none" stroke="#5a2810" stroke-width=".5"/>
  <circle cx="531" cy="200" r="1.5" fill="#f8f0b0"/>
  <circle cx="514.5" cy="207" r="1.5" fill="#f8f0b0"/>
  <circle cx="580" cy="172" r="1.2" fill="#f0e0a0"/>
  <circle cx="610" cy="172" r="1.2" fill="#f0e0a0"/>
  <circle cx="659" cy="200" r="1.5" fill="#f8f0b0"/>
  <circle cx="676" cy="207" r="1.5" fill="#f8f0b0"/>
  <ellipse cx="615" cy="245.5" rx="4.2" ry="2" fill="#0e0e0e"/>
  <rect x="612.5" y="229" width="5.5" height="15" fill="#d8c0a8"/>
  <path d="M611 220H619L620 231H611Z" fill="#1e2636"/>
  <path d="M618 220L621 224 619 228Z" fill="#8a9ab8"/>
  <circle cx="615" cy="216.5" r="2.6" fill="#1c2438"/>
  <path d="M637 242H655L659 264H636Z" fill="#d8602a"/>
  <path d="M639.5 244.5H653L656 262H638.5Z" fill="#5a2a2a"/>
  </g>
</svg>

  <div class="a" style="left:3px;top:167px;width:166px;height:48px;background:#ececec"></div>
  <div class="a ft" style="left:7px;top:170.2px;width:166px;font-size:6.3px;line-height:7.6px;color:#2a6ab8">Mixing retro Resident Evil vibes with a mystery dungeon, House of Necrosis arrives in October</div>
  <div class="a ft" style="left:7px;top:187.4px;font-size:3.4px;color:#333">By <b style="color:#2a6ab8">Liam Dawe</b>, 2 hours ago</div>
  <div class="a" style="left:159.5px;top:186.4px;width:5px;height:4px;background:#555"></div>
  <div class="a ft" style="left:7px;top:194.1px;width:160px;font-size:4px;line-height:6.5px;color:#333;text-align:justify;text-align-last:left">Looking a lot like a classic Resident Evil game but switching things up to be turn-based, with dungeon exploration - House of Necrosis looks genuinely very cool.</div>
  <div class="a tag" style="left:7px;top:207.6px;width:19px">Native Linux</div>
  <div class="a tag" style="left:28px;top:207.6px;width:9.8px">Demo</div>
  <div class="a tag" style="left:39.8px;top:207.6px;width:11.4px">Horror</div>
  <div class="a tag" style="left:53.2px;top:207.6px;width:17.5px">Indie Game</div>
</div>

<!-- quick settings -->
<div class="a" style="left:622.5px;top:12px;width:115px;height:73px;border-radius:9px;background:#38383c;box-shadow:0 1px 3px rgba(0,0,0,.35)">
  <div class="a qc" style="left:5.2px;top:6.2px"></div>
  <svg class="a" style="left:7.7px;top:8.7px" width="6" height="6" viewBox="0 0 6 6"><circle cx="1.5" cy="1.4" r=".7" fill="#eee"/><circle cx="4.5" cy="1.4" r=".7" fill="#eee"/><path d="M2.2 3.2H5.2V5.2H2.2Z" fill="#eee"/><path d="M.8 4.2L2.2 3.6V4.8Z" fill="#eee"/></svg>
  <div class="a qc" style="left:19.8px;top:6.2px"></div>
  <svg class="a" style="left:22.3px;top:8.7px" width="6" height="6" viewBox="0 0 6 6"><path d="M3 .6L5.2 2.6 3 5.4 .8 2.6Z" fill="none" stroke="#eee" stroke-width=".9"/><circle cx="3" cy="2.9" r=".7" fill="#eee"/></svg>
  <div class="a qc" style="left:85px;top:6.2px"></div>
  <svg class="a" style="left:87.5px;top:8.7px" width="6" height="6" viewBox="0 0 6 6"><rect x="1.1" y="2.6" width="3.8" height="2.8" rx=".3" fill="#eee"/><path d="M1.9 2.6V1.9Q1.9 .7 3 .7 4.1 .7 4.1 1.9V2.6" fill="none" stroke="#eee" stroke-width=".7"/></svg>
  <div class="a qc" style="left:99.7px;top:6.2px"></div>
  <svg class="a" style="left:102.2px;top:8.7px" width="6" height="6" viewBox="0 0 6 6"><path d="M4.4 1.9A2.1 2.1 0 1 1 1.6 1.9" fill="none" stroke="#eee" stroke-width=".75"/><path d="M3 .6V2.9" stroke="#eee" stroke-width=".75"/></svg>
  <svg class="a" style="left:6.2px;top:23px" width="6" height="6" viewBox="0 0 6 6"><path d="M.6 2.2H1.8L3.2 1V5L1.8 3.8H.6Z" fill="#eee"/><path d="M4 1.8Q4.8 3 4 4.2M4.9 1.2Q6 3 4.9 4.8" stroke="#eee" stroke-width=".5" fill="none"/></svg>
  <div class="a" style="left:16px;top:25.2px;width:82.5px;height:1.2px;border-radius:1px;background:#58585c"></div>
  <div class="a" style="left:16px;top:25.1px;width:56px;height:1.5px;border-radius:1px;background:#3a74c0"></div>
  <div class="a" style="left:69.3px;top:23.1px;width:5.4px;height:5.4px;border-radius:50%;background:#f4f4f4"></div>
  <svg class="a" style="left:103.8px;top:23px" width="5" height="6" viewBox="0 0 5 6"><path d="M1.5 1L3.5 3 1.5 5" stroke="#eee" stroke-width=".7" fill="none"/></svg>

  <div class="a" style="left:4.9px;top:34px;width:50.9px;height:14.8px;border-radius:7.4px;background:#3584e4;overflow:hidden"><div class="a" style="left:40px;top:0;width:11px;height:15px;background:#4c92e8"></div></div>
  <svg class="a" style="left:8.7px;top:38.5px" width="6" height="6" viewBox="0 0 6 6"><circle cx="3" cy="1.2" r=".9" fill="#fff"/><circle cx="1.2" cy="4.8" r=".9" fill="#fff"/><circle cx="4.8" cy="4.8" r=".9" fill="#fff"/><path d="M3 1.2L1.2 4.8M3 1.2L4.8 4.8" stroke="#fff" stroke-width=".6"/></svg>
  <div class="a qt" style="left:16.3px;top:39.3px;font-size:4.7px">Wired</div>
  <svg class="a" style="left:48.5px;top:38.5px" width="5" height="6" viewBox="0 0 5 6"><path d="M1.5 1L3.5 3 1.5 5" stroke="#fff" stroke-width=".7" fill="none"/></svg>

  <div class="a" style="left:59.5px;top:34px;width:51px;height:14.8px;border-radius:7.4px;background:#48484c"></div>
  <svg class="a" style="left:63px;top:38.6px" width="6" height="6" viewBox="0 0 6 6"><path d="M3 5.4V3.2M3 3.2L1.4 1.4V.6M3 3.2L4.6 1.4V.6M1.4 .8H4.6" stroke="#eee" stroke-width=".8" fill="none"/></svg>
  <div class="a qt" style="left:71px;top:36.6px;font-size:4.3px">Power Mode</div>
  <div class="a" style="left:71px;top:42.2px;font-size:3.7px;color:#aaa;white-space:nowrap;line-height:5px">Balanced</div>

  <div class="a" style="left:4.9px;top:52.5px;width:50.9px;height:14.7px;border-radius:7.4px;background:#48484c"></div>
  <svg class="a" style="left:8.5px;top:57px" width="6" height="6" viewBox="0 0 6 6"><circle cx="3" cy="3" r="2.2" fill="none" stroke="#eee" stroke-width=".7"/><path d="M3 .8A2.2 2.2 0 0 1 3 5.2Z" fill="#eee"/></svg>
  <div class="a qt" style="left:16.3px;top:58px">Dark Style</div>

  <div class="a" style="left:59.5px;top:52.5px;width:51px;height:14.7px;border-radius:7.4px;background:#48484c"></div>
  <svg class="a" style="left:63px;top:57px" width="6" height="6" viewBox="0 0 6 6"><path d="M1.4 4.4H4.6L4 3.6V2.4Q4 1.2 3 1.2 2 1.2 2 2.4V3.6Z" fill="none" stroke="#eee" stroke-width=".6"/><path d="M.8 .8L5.2 5.2" stroke="#eee" stroke-width=".6"/></svg>
  <div class="a qt" style="left:71px;top:57.8px;font-size:4.2px">Do Not Disturb</div>
</div>

<!-- dock -->
<div class="a" style="left:273px;top:385px;width:193.5px;height:31.2px;border-radius:9px;background:#38383c"></div>
<!-- globe -->
<div class="a" style="left:278.8px;top:391px;width:18px;height:19.2px;border-radius:50%;background:radial-gradient(circle at 35% 30%,#58c89a 0%,#2fa888 35%,#2a86c8 70%,#2a5ab8 100%)"></div>
<svg class="a" style="left:278.8px;top:391px" width="18" height="19.2" viewBox="0 0 18 19.2"><path d="M9 .5V18.7M.5 9.6H17.5M2 4.8H16M2 14.4H16M9 .5Q3 9.6 9 18.7M9 .5Q15 9.6 9 18.7" stroke="rgba(255,255,255,.12)" stroke-width=".6" fill="none"/></svg>
<!-- calendar -->
<div class="a" style="left:302.8px;top:392.4px;width:15.4px;height:16.6px;border-radius:1.5px;background:#fafafa;box-shadow:0 .5px 1px rgba(0,0,0,.4)"></div>
<div class="a" style="left:302.8px;top:392.4px;width:15.4px;height:3.2px;border-radius:1.5px 1.5px 0 0;background:#8a3aa8"></div>
<svg class="a" style="left:302.8px;top:396px" width="15.4" height="12" viewBox="0 0 15.4 12"><g fill="#c8c8c8"><circle cx="6" cy="2" r=".5"/><circle cx="8.5" cy="2" r=".5"/><circle cx="11" cy="2" r=".5"/><circle cx="13.4" cy="2" r=".5"/><circle cx="3.5" cy="5" r=".5"/><circle cx="11" cy="5" r=".5"/><circle cx="13.4" cy="5" r=".5"/><circle cx="3.5" cy="8" r=".5"/><circle cx="6" cy="8" r=".5"/></g><circle cx="8" cy="5" r="1.2" fill="#7a2a98"/><path d="M5.5 5H10.5" stroke="#7a2a98" stroke-width=".3"/></svg>
<!-- files -->
<div class="a" style="left:327.2px;top:391.8px;width:13.2px;height:17.5px;border-radius:1.2px;background:#3a7ee0;border:.7px solid #cfe0f8"></div>
<svg class="a" style="left:327.2px;top:391.8px" width="13.2" height="17.5" viewBox="0 0 13.2 17.5"><path d="M2 6H11.2M2 11.5H11.2" stroke="#2a5ab0" stroke-width=".5"/><path d="M5.2 3.6V3H8V3.6M5.2 9V8.4H8V9M5.2 14.4V13.8H8V14.4" stroke="#e8f0ff" stroke-width=".6" fill="none"/></svg>
<div class="a" style="left:333px;top:411.5px;width:1.3px;height:1.3px;border-radius:50%;background:#ddd"></div>
<!-- software -->
<svg class="a" style="left:348.8px;top:391.5px" width="16.5" height="17.5" viewBox="0 0 16.5 17.5"><path d="M5.3 4.2V2.2Q5.3 .9 6.6 .9H9.9Q11.2 .9 11.2 2.2V4.2" stroke="#ddd" stroke-width=".9" fill="none"/><rect x=".5" y="3.4" width="15.5" height="13.8" rx="1" fill="#f2f2f2"/><rect x=".5" y="15.2" width="15.5" height="2" rx="1" fill="#d8d8d8"/><circle cx="10.4" cy="6.6" r="1.8" fill="#8a4ae0"/><circle cx="5" cy="10.4" r="2" fill="#f0603a"/><path d="M11.6 8.8V13.4L8 11.1Z" fill="#2a7ae0"/></svg>
<div class="a" style="left:356.2px;top:411.5px;width:1.3px;height:1.3px;border-radius:50%;background:#ddd"></div>
<!-- text editor -->
<div class="a" style="left:373.4px;top:392px;width:14px;height:17px;border-radius:1px;background:#f6f6f6;box-shadow:0 .5px 1px rgba(0,0,0,.4)"></div>
<div class="a" style="left:373.4px;top:392px;width:14px;height:1.8px;border-radius:1px 1px 0 0;background:#3a7ee0"></div>
<svg class="a" style="left:373.4px;top:391px" width="15.5" height="18" viewBox="0 0 15.5 18"><path d="M13.2 2.2L14.6 3.6 5 13.4 2.8 14.6 3.8 12Z" fill="#f0a030"/><path d="M13.2 2.2L14.6 3.6 13.8 4.4 12.4 3Z" fill="#e04a4a"/><path d="M2.8 14.6L3.8 12 5 13.4Z" fill="#333"/></svg>
<!-- calculator -->
<div class="a" style="left:397px;top:392px;width:12.2px;height:17px;border-radius:1.5px;background:#d8d8d4;box-shadow:0 .5px 1px rgba(0,0,0,.4)"></div>
<div class="a" style="left:398.6px;top:393.6px;width:9px;height:3px;background:#5aa86a"></div>
<svg class="a" style="left:397px;top:392px" width="12.2" height="17" viewBox="0 0 12.2 17"><g fill="#555"><rect x="1.6" y="7" width="2" height="1.8"/><rect x="5.1" y="7" width="2" height="1.8"/><rect x="1.6" y="10" width="2" height="1.8"/><rect x="5.1" y="10" width="2" height="1.8"/><rect x="1.6" y="13" width="2" height="1.8"/><rect x="5.1" y="13" width="2" height="1.8"/></g><rect x="8.6" y="7" width="2" height="1.8" fill="#555"/><rect x="8.6" y="10" width="2" height="4.8" fill="#f08a30"/></svg>
<div class="a" style="left:416.5px;top:391px;width:.5px;height:19px;background:#4a4a4e"></div>
<!-- firefox -->
<svg class="a" style="left:420.5px;top:391.3px" width="17.5" height="18.5" viewBox="0 0 17.5 18.5"><defs><radialGradient id="ffg" cx="60%" cy="25%" r="80%"><stop offset="0" stop-color="#ffe040"/><stop offset=".35" stop-color="#ff9a20"/><stop offset=".7" stop-color="#f04040"/><stop offset="1" stop-color="#d02070"/></radialGradient><radialGradient id="ffp" cx="50%" cy="40%" r="60%"><stop offset="0" stop-color="#a050f0"/><stop offset="1" stop-color="#5a2ad0"/></radialGradient></defs><path d="M11 .4Q12.8 2.8 13.4 4.6 16.8 6.6 17 10.4 17 15.6 12.6 17.8 8.4 19.4 4.6 17.4 .4 15 .4 10 .6 6.2 3.4 4.4 3 6 3.6 7.2 5 4.6 8.6 4.2 11.4 3 11 .4Z" fill="url(#ffg)"/><circle cx="8.8" cy="10.8" r="4" fill="url(#ffp)"/><path d="M4.4 9Q6 6.8 8.8 6.9 12 7 13.4 9.4 12 7.8 9 8.4 6.6 9 6.4 11 5 10.4 4.4 9Z" fill="#ff9a30"/></svg>
<div class="a" style="left:428.2px;top:411.3px;width:1.3px;height:1.3px;border-radius:50%;background:#ddd"></div>
<!-- app grid -->
<svg class="a" style="left:445px;top:393px" width="15" height="15" viewBox="0 0 15 15"><g fill="#f0f0f0"><circle cx="2.3" cy="2.5" r="1.2"/><circle cx="7" cy="2.5" r="1.2"/><circle cx="11.8" cy="2.5" r="1.2"/><circle cx="2.3" cy="7.5" r="1.2"/><circle cx="7" cy="7.5" r="1.2"/><circle cx="11.8" cy="7.5" r="1.2"/><circle cx="2.3" cy="12.7" r="1.2"/><circle cx="7" cy="12.7" r="1.2"/><circle cx="11.8" cy="12.7" r="1.2"/></g></svg>
<!-- badges -->
<div class="a" style="left:150.6px;top:277.8px;width:17px;height:17.5px">
<svg width="17" height="17.5" viewBox="0 0 16.5 17.5"><path d="M5.3 4.2V2.2Q5.3 .9 6.6 .9H9.9Q11.2 .9 11.2 2.2V4.2" stroke="#ddd" stroke-width=".9" fill="none"/><rect x=".5" y="3.4" width="15.5" height="13.8" rx="1" fill="#f2f2f2"/><rect x=".5" y="15.2" width="15.5" height="2" rx="1" fill="#d8d8d8"/><circle cx="10.4" cy="6.6" r="1.8" fill="#8a4ae0"/><circle cx="5" cy="10.4" r="2" fill="#f0603a"/><path d="M11.6 8.8V13.4L8 11.1Z" fill="#2a7ae0"/></svg></div>
<div class="a" style="left:377.9px;top:269.3px;width:11.6px;height:16.4px;border-radius:1.2px;background:#3a7ee0;border:.7px solid #cfe0f8"></div>
<svg class="a" style="left:377.9px;top:269.3px" width="11.6" height="16.4" viewBox="0 0 11.6 16.4"><path d="M1.8 5.6H9.8M1.8 10.8H9.8" stroke="#2a5ab0" stroke-width=".5"/><path d="M4.5 3.4V2.8H7.1V3.4M4.5 8.6V8H7.1V8.6M4.5 13.8V13.2H7.1V13.8" stroke="#e8f0ff" stroke-width=".6" fill="none"/></svg>
<svg class="a" style="left:587px;top:299px" width="16.5" height="17.5" viewBox="0 0 17.5 18.5"><path d="M11 .4Q12.8 2.8 13.4 4.6 16.8 6.6 17 10.4 17 15.6 12.6 17.8 8.4 19.4 4.6 17.4 .4 15 .4 10 .6 6.2 3.4 4.4 3 6 3.6 7.2 5 4.6 8.6 4.2 11.4 3 11 .4Z" fill="url(#ffg)"/><circle cx="8.8" cy="10.8" r="4" fill="url(#ffp)"/><path d="M4.4 9Q6 6.8 8.8 6.9 12 7 13.4 9.4 12 7.8 9 8.4 6.6 9 6.4 11 5 10.4 4.4 9Z" fill="#ff9a30"/></svg>
</body></html>
